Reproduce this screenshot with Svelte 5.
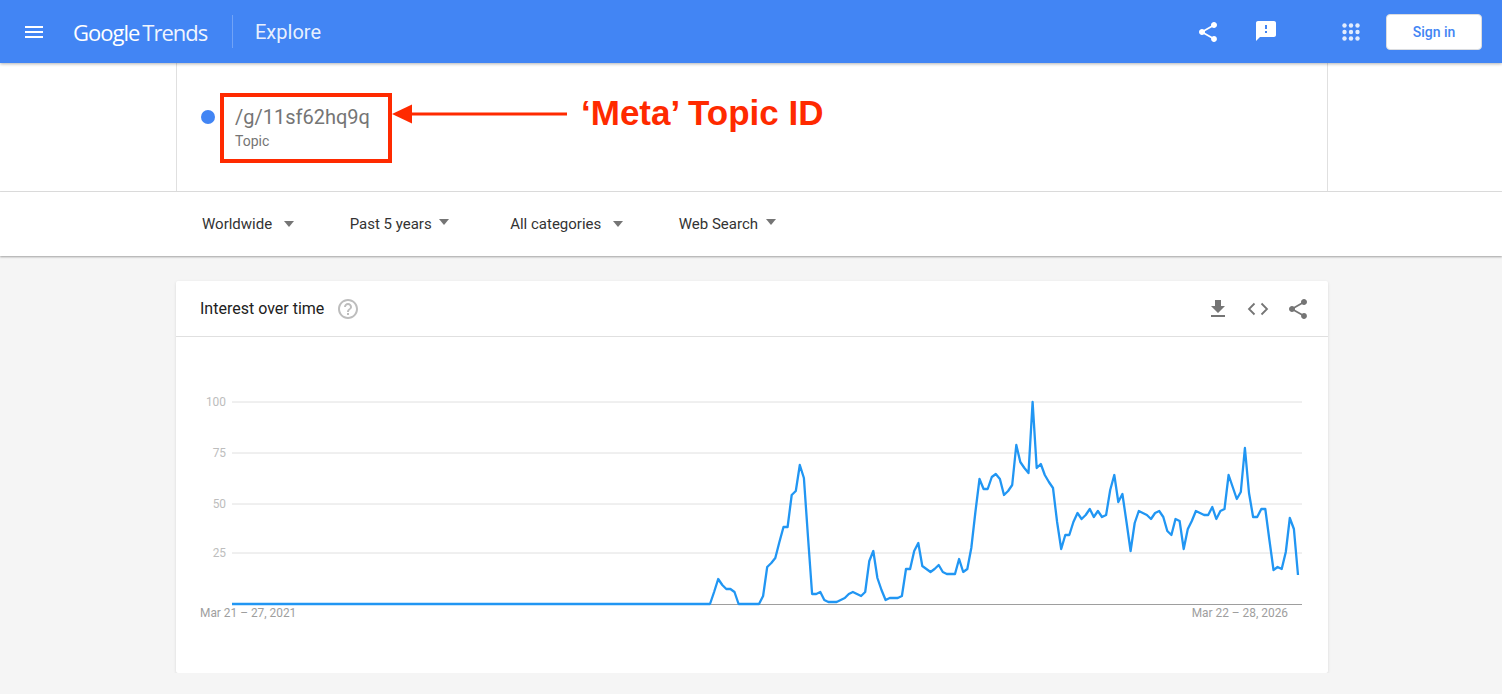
<script>
  const filters = [
    { label: 'Worldwide', raised: false },
    { label: 'Past 5 years', raised: true },
    { label: 'All categories', raised: false },
    { label: 'Web Search', raised: true }
  ];

  const grid = [
    { y: 402, label: '100' },
    { y: 453, label: '75' },
    { y: 504, label: '50' },
    { y: 553, label: '25' }
  ];

  // y values read off the chart, one per week, starting where the line leaves zero
  const series = [
    604, 592, 579, 585, 589, 589, 592, 604, 604, 604, 604, 604, 604, 596, 567, 563, 558, 542, 527, 527, 495,
    491, 465, 478, 537, 594, 594, 592, 600, 602, 602, 602, 600, 598, 594, 592, 594, 596, 592, 561, 551,
    578, 590, 600, 598, 598, 598, 596, 569, 569, 551, 543, 566, 569, 572, 569, 565, 572, 574, 574, 574,
    559, 572, 569, 548, 512, 479, 489, 489, 477, 474, 479, 495, 491, 485, 445, 462, 468, 473, 402, 468,
    464, 475, 482, 488, 522, 549, 535, 535, 522, 513, 519, 515, 509, 517, 511, 517, 515, 490, 475, 502,
    494, 522, 551, 523, 511, 513, 515, 519, 513, 511, 517, 531, 535, 519, 521, 549, 529, 521, 511, 513,
    515, 515, 507, 519, 511, 509, 475, 487, 499, 492, 448, 493, 517, 517, 509, 509, 540, 570, 567, 569,
    552, 518, 529, 575
  ];
  const startX = 710;
  const step = (1298 - startX) / (series.length - 1);
  const points = '232,604 ' + series.map((y, i) => `${(startX + i * step).toFixed(1)},${y}`).join(' ');

  const sharePath = 'M18 16.08c-.76 0-1.44.3-1.96.77L8.91 12.7c.05-.23.09-.46.09-.7s-.04-.47-.09-.7l7.05-4.11c.54.5 1.25.81 2.04.81 1.66 0 3-1.34 3-3s-1.34-3-3-3-3 1.34-3 3c0 .24.04.47.09.7L8.04 9.81C7.5 9.31 6.79 9 6 9c-1.66 0-3 1.34-3 3s1.34 3 3 3c.79 0 1.5-.31 2.04-.81l7.12 4.16c-.05.21-.08.43-.08.65 0 1.61 1.31 2.92 2.92 2.92 1.61 0 2.92-1.31 2.92-2.92s-1.31-2.92-2.92-2.92z';
  const dots = [5.5, 12, 18.5];
</script>

<header class="topbar">
  <svg class="menu" viewBox="0 0 24 24" width="24" height="24"><path d="M3 18h18v-2H3v2zm0-5h18v-2H3v2zm0-7v2h18V6H3z" /></svg>
  <div class="logo"><span class="google">Google</span><span class="trends">Trends</span></div>
  <div class="divider"></div>
  <div class="page">Explore</div>
  <div class="actions">
    <svg class="share" viewBox="0 0 24 24" width="24" height="24"><path d={sharePath} /></svg>
    <svg class="feedback" viewBox="0 0 24 24" width="24" height="24"><path d="M20 2H4c-1.1 0-1.99.9-1.99 2L2 22l4-4h14c1.1 0 2-.9 2-2V4c0-1.1-.9-2-2-2zm-7 12h-2v-2h2v2zm0-4h-2V6h2v4z" /></svg>
    <svg class="apps" viewBox="0 0 24 24" width="24" height="24">
      {#each dots as cy}
        {#each dots as cx}
          <circle {cx} {cy} r="2.2" />
        {/each}
      {/each}
    </svg>
    <button class="signin">Sign in</button>
  </div>
</header>

<section class="search">
  <div class="search-inner">
    <span class="dot"></span>
    <div class="term">
      <div class="term-name">/g/11sf62hq9q</div>
      <div class="term-type">Topic</div>
    </div>
    <svg class="arrow" width="175" height="24" viewBox="0 0 175 24">
      <path d="M0 12L20 2.500V21.500Z" />
      <rect x="18" y="10.500" width="157" height="3" />
    </svg>
    <div class="note">‘Meta’ Topic ID</div>
  </div>
</section>

<nav class="filters">
  <div class="filters-inner">
    {#each filters as f}
      <div class="filter">
        <span>{f.label}</span>
        <i class="caret" class:raised={f.raised}></i>
      </div>
    {/each}
  </div>
</nav>

<main class="content">
  <article class="card">
    <div class="card-head">
      <h2>Interest over time</h2>
      <svg class="help" viewBox="0 0 24 24" width="24" height="24"><path d="M11 18h2v-2h-2v2zm1-16C6.48 2 2 6.48 2 12s4.480 10 10 10 10-4.480 10-10S17.520 2 12 2zm0 18c-4.410 0-8-3.590-8-8s3.590-8 8-8 8 3.590 8 8-3.590 8-8 8zm0-14c-2.210 0-4 1.790-4 4h2c0-1.100.9-2 2-2s2 .9 2 2c0 2-3 1.750-3 5h2c0-2.250 3-2.500 3-5 0-2.210-1.790-4-4-4z" /></svg>
      <div class="card-actions">
        <svg viewBox="0 0 24 24" width="24" height="24"><path d="M19 9h-4V3H9v6H5l7 7 7-7zM5 18v2h14v-2H5z" /></svg>
        <svg class="code" viewBox="0 0 24 24" width="24" height="24"><path d="M8.500 6.500L3 12l5.500 5.500M15.500 6.500L21 12l-5.500 5.500" /></svg>
        <svg viewBox="0 0 24 24" width="24" height="24"><path d={sharePath} /></svg>
      </div>
    </div>
    <svg class="chart" viewBox="176 337 1152 336" width="1152" height="336">
      {#each grid as g}
        <line class="gridline" x1="232" x2="1302" y1={g.y} y2={g.y} />
        <text class="tick" x="226" y={g.y + 4} text-anchor="end">{g.label}</text>
      {/each}
      <line class="baseline" x1="232" x2="1302" y1="604.500" y2="604.500" />
      <polyline class="trend" {points} />
      <text class="date" x="200" y="617">Mar 21 – 27, 2021</text>
      <text class="date" x="1288" y="617" text-anchor="end">Mar 22 – 28, 2026</text>
    </svg>
  </article>
</main>

<style>
  :global(body) {
    background: #f5f5f5;
    font-family: Roboto, "Liberation Sans", sans-serif;
  }

  .topbar {
    height: 63px;
    background: #4285f4;
    box-shadow: 0 1px 3px rgba(0, 0, 0, 0.3);
    display: flex;
    align-items: center;
    color: #fff;
    position: relative;
    z-index: 2;
  }
  .topbar svg { fill: #fff; }
  .menu { margin-left: 22px; }
  .logo {
    margin-left: 27px;
    padding-top: 1px;
    width: 136px;
    display: flex;
    align-items: baseline;
    font-family: "Open Sans", sans-serif;
    font-size: 22px;
    letter-spacing: -1px;
    color: #fff;
  }
  .trends { margin-left: 3px; opacity: 0.92; }
  .divider {
    width: 1px;
    height: 33px;
    margin-left: 23px;
    background: rgba(255, 255, 255, 0.25);
  }
  .page {
    margin-left: 22px;
    font-size: 20px;
    color: rgba(255, 255, 255, 0.9);
  }
  .actions {
    margin-left: auto;
    margin-right: 20px;
    display: flex;
    align-items: center;
  }
  .feedback { margin-left: 34px; margin-top: -2px; }
  .apps { margin-left: 61px; opacity: 0.85; }
  .signin {
    margin-left: 23px;
    width: 96px;
    height: 36px;
    border: 1px solid #dadce0;
    border-radius: 4px;
    background: #fff;
    color: #4285f4;
    font: 500 14px Roboto, sans-serif;
    padding: 0;
  }

  .search {
    background: #fff;
    height: 128px;
    border-bottom: 1px solid #e0e0e0;
  }
  .search-inner {
    width: 1152px;
    height: 100%;
    margin-left: 176px;
    box-sizing: border-box;
    border-left: 1px solid #e0e0e0;
    border-right: 1px solid #e0e0e0;
    display: flex;
    align-items: flex-start;
  }
  .dot {
    width: 14px;
    height: 14px;
    border-radius: 50%;
    background: #4285f4;
    margin: 47px 0 0 24px;
  }
  .term {
    width: 172px;
    height: 70px;
    box-sizing: border-box;
    margin: 30px 0 0 5px;
    border: 4px solid #ff2a00;
    padding: 6px 0 0 11px;
  }
  .term-name {
    font-size: 20px;
    line-height: 28px;
    color: #757575;
  }
  .term-type {
    font-size: 14px;
    line-height: 20px;
    color: #757575;
  }
  .arrow {
    fill: #ff2a00;
    margin: 39px 0 0 0;
  }
  .note {
    margin: 27px 0 0 14px;
    font: bold 35px/46px "Liberation Sans", Arial, sans-serif;
    color: #ff2a00;
  }

  .filters {
    background: #fff;
    height: 64px;
    box-shadow: 0 1px 2px rgba(0, 0, 0, 0.35);
    position: relative;
  }
  .filters-inner {
    margin-left: 202px;
    height: 100%;
    display: flex;
    align-items: center;
    gap: 56px;
  }
  .filter {
    display: flex;
    align-items: center;
    font-size: 15px;
    color: #333;
  }
  .caret {
    width: 0;
    height: 0;
    margin-left: 11.500px;
    border-left: 5.750px solid transparent;
    border-right: 5.750px solid transparent;
    border-top: 6px solid #757575;
  }
  .caret.raised { margin-left: 7.500px; margin-right: 5px; transform: translateY(-2px); }

  .content { padding: 25px 0 0 176px; }
  .card {
    width: 1152px;
    height: 392px;
    background: #fff;
    border-radius: 2px;
    box-shadow: 0 1px 3px rgba(0, 0, 0, 0.12);
  }
  .card-head {
    height: 55px;
    border-bottom: 1px solid #e0e0e0;
    display: flex;
    align-items: center;
    padding: 0 18px 0 24px;
  }
  .card-head h2 {
    margin: 0;
    font-size: 16px;
    font-weight: 400;
    color: #212121;
  }
  .help { fill: #bdbdbd; margin-left: 12px; }
  .card-actions {
    margin-left: auto;
    display: flex;
    gap: 16px;
    fill: #757575;
  }
  .code { fill: none; stroke: #757575; stroke-width: 1.800; }
  .chart { display: block; }
  .gridline { stroke: #e0e0e0; stroke-width: 1; }
  .baseline { stroke: #9e9e9e; stroke-width: 1; }
  .trend {
    fill: none;
    stroke: #2196f3;
    stroke-width: 2.300;
    stroke-linejoin: round;
  }
  .tick { font-size: 11.900px; fill: #bdbdbd; }
  .date { font-size: 11.900px; fill: #9e9e9e; }
</style>
